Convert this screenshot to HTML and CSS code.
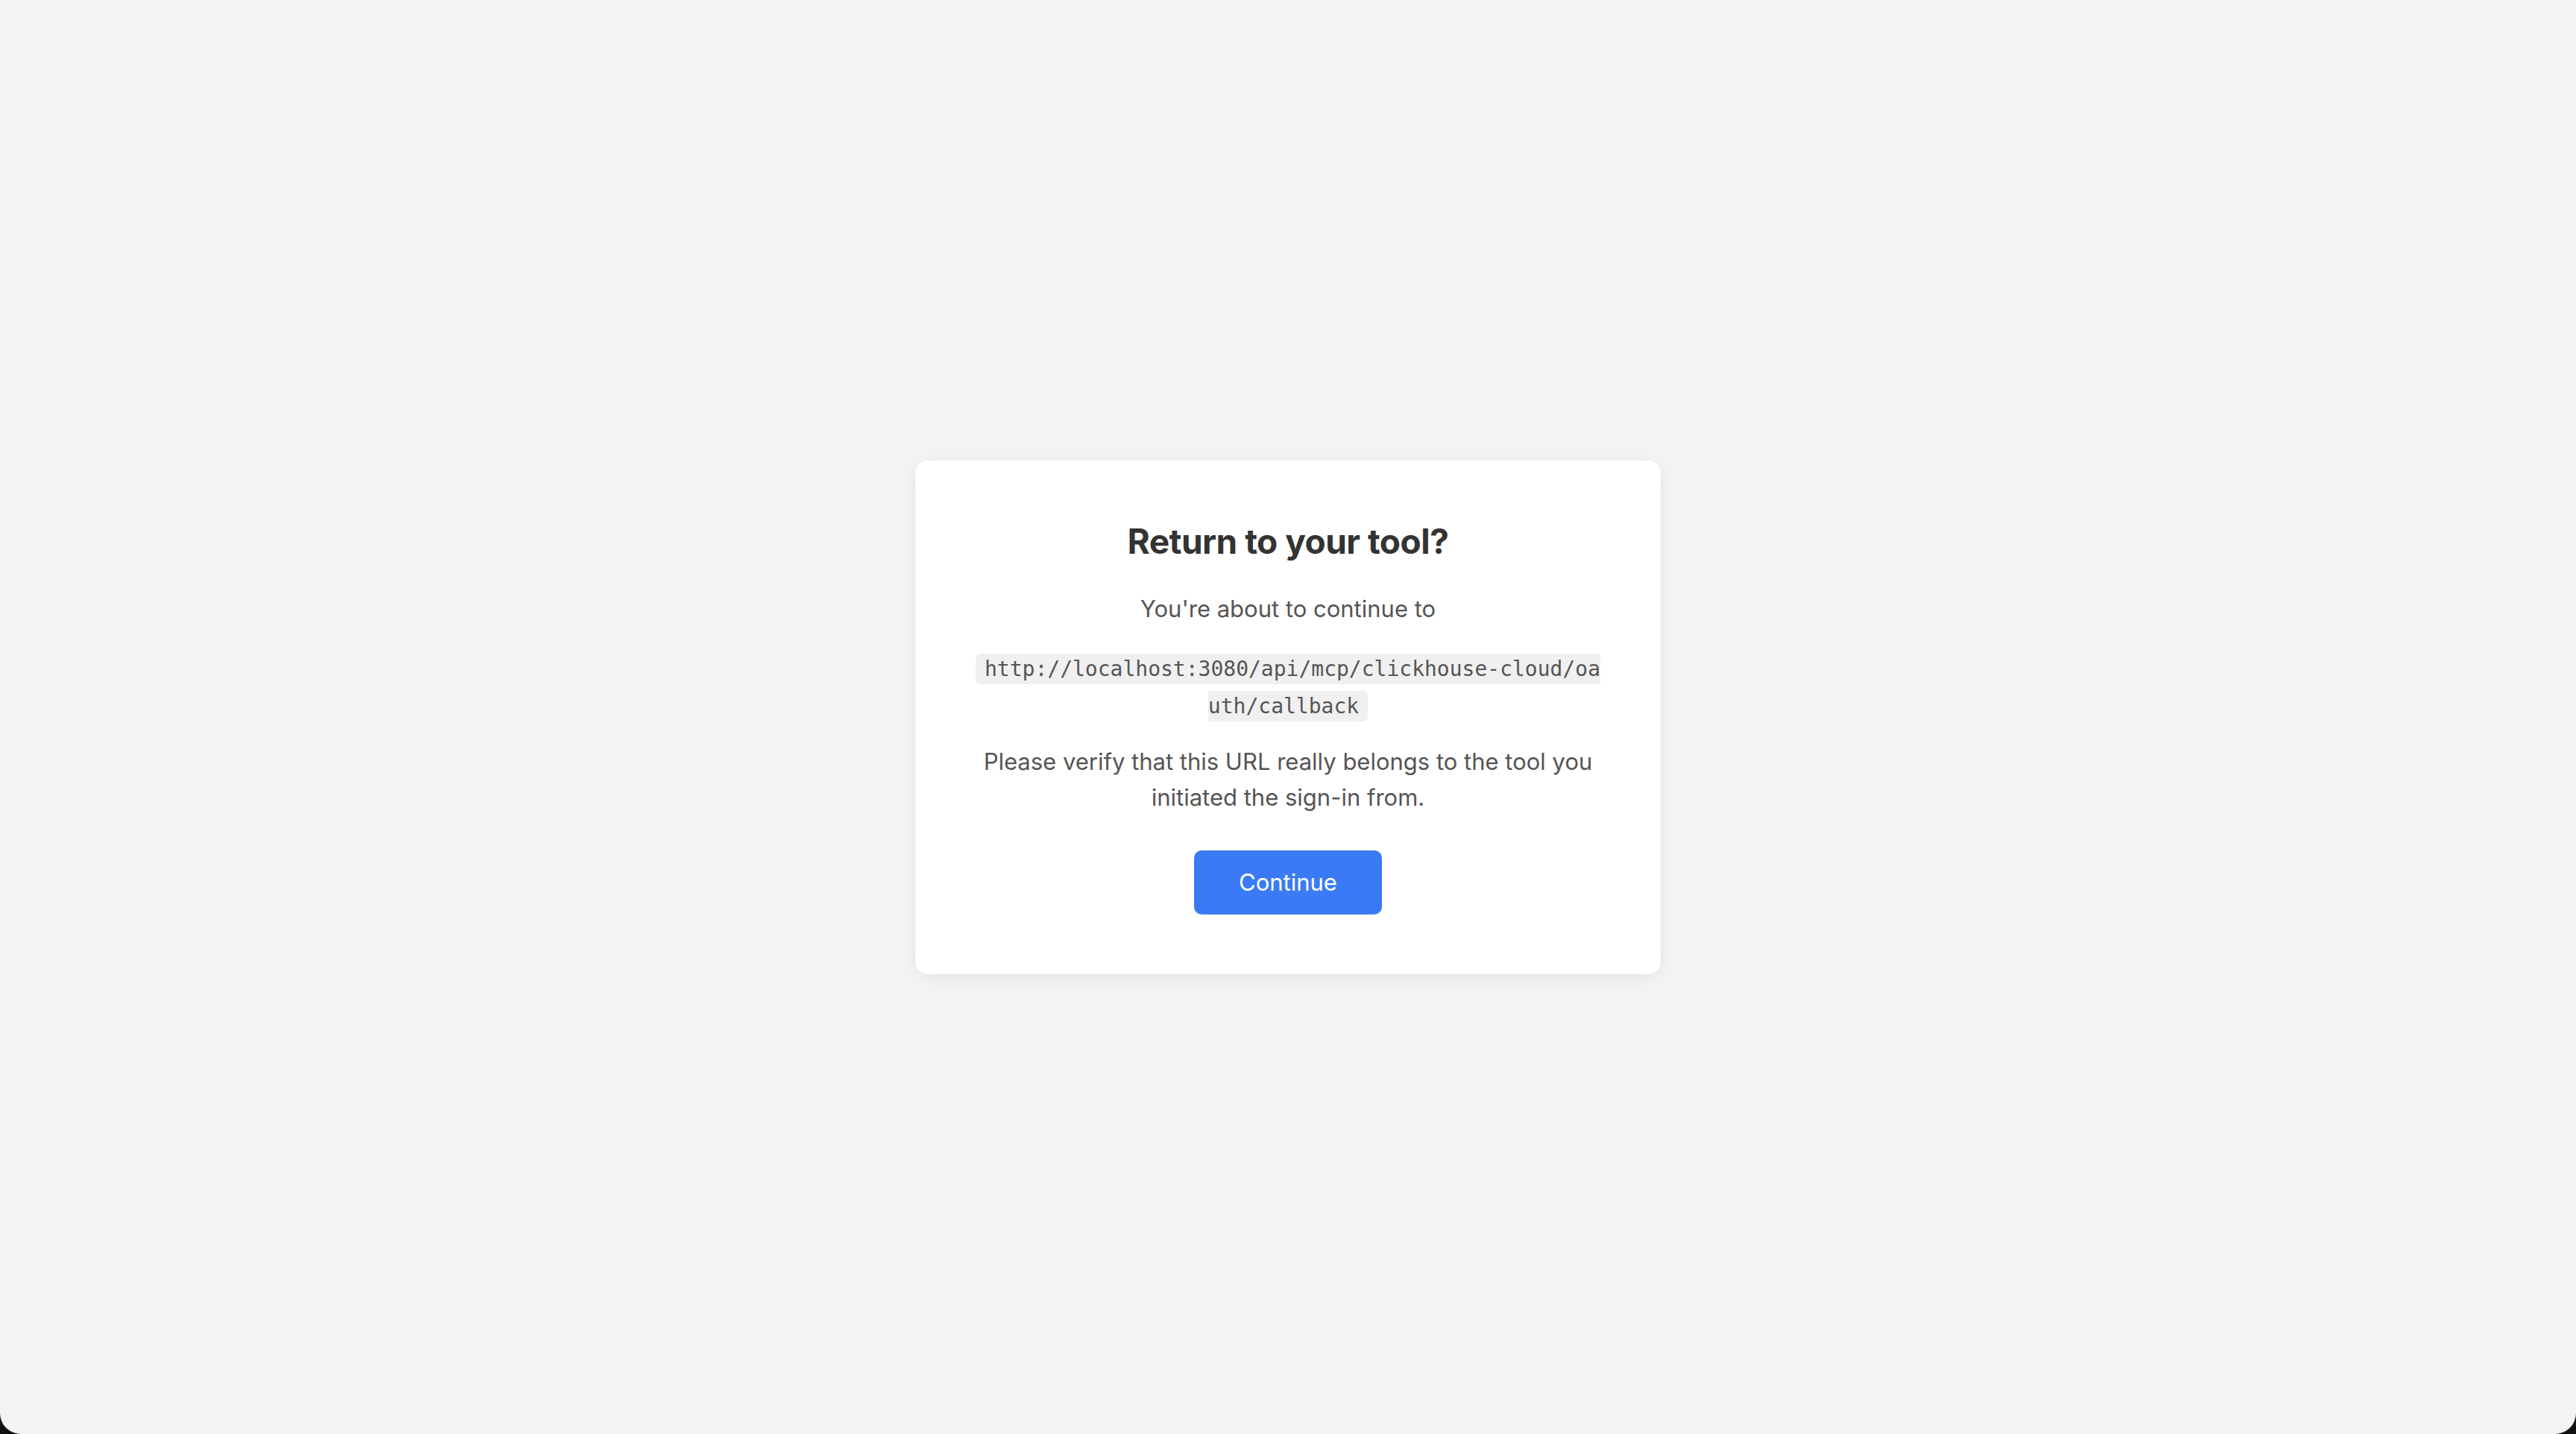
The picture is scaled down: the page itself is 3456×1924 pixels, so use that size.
FILE: index.html
```html
<!DOCTYPE html>
<html lang="en">
<head>
    <meta charset="UTF-8">
    <title>Return to your tool?</title>
    <link rel="stylesheet" href="styles.css">
</head>
<body>
    <div class="page">
        <div class="card">
            <h2>Return to your tool?</h2>
            <p class="lead">You're about to continue to</p>
            <p class="target"><code>http://localhost:3080/api/mcp/clickhouse-cloud/oauth/callback</code></p>
            <p>Please verify that this URL really belongs to the tool you initiated the sign-in from.</p>
            <button type="button">Continue</button>
        </div>
    </div>
</body>
</html>
```

FILE: styles.css
```css
html {
    background: #111;
}
body {
    margin: 0;
    font-family: 'Inter', 'Noto Sans', sans-serif;
    color: #555;
}
.page {
    background: #f4f4f4;
    min-height: 100vh;
    display: flex;
    align-items: center;
    justify-content: center;
    border-bottom-left-radius: 28px;
    border-bottom-right-radius: 28px;
}
.card {
    background: #fff;
    width: 1000px;
    box-sizing: border-box;
    padding: 80px;
    border-radius: 16px;
    box-shadow: 0 4px 24px rgba(0,0,0,0.07);
    text-align: center;
}
h2 {
    font-size: 46px;
    font-weight: 700;
    color: #333;
    margin: 0 0 39px;
    letter-spacing: -0.5px;
}
p {
    font-size: 31px;
    line-height: 48px;
    margin: 0 0 26px;
}
.lead {
    margin-bottom: 31px;
}
code {
    font-family: 'DejaVu Sans Mono', monospace;
    font-size: 28px;
    background: #f0f0f0;
    color: #555;
    padding: 4px 12px;
    border-radius: 6px;
    word-break: break-all;
}
button {
    margin-top: 21px;
    font-family: inherit;
    font-size: 31px;
    line-height: 48px;
    background: #3a7bf5;
    color: #fff;
    border: none;
    border-radius: 10px;
    padding: 19px 60px;
    cursor: pointer;
}
```
